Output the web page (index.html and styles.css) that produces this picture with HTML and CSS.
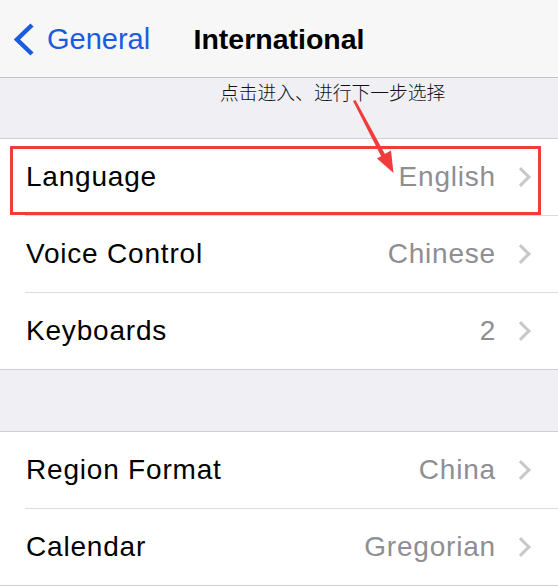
FILE: index.html
```html
<!DOCTYPE html>
<html>
<head>
<meta charset="utf-8">
<link rel="stylesheet" href="styles.css">
</head>
<body>
<div class="screen">
  <header class="nav">
    <div class="back">
      <svg class="back-icon" width="24" height="36" viewBox="0 0 24 36"><polyline points="18,3 3,17.5 18,32" fill="none" stroke="#1a5ce0" stroke-width="4.5" stroke-linecap="butt" stroke-linejoin="miter"/></svg>
      <span class="back-label">General</span>
    </div>
    <div class="title">International</div>
    <div></div>
  </header>
  <div class="spacer first"></div>
  <section class="group">
    <div class="row"><div class="cell"><span class="label">Language</span><span class="value">English</span><span class="chev"></span></div></div>
    <div class="row"><div class="cell"><span class="label">Voice Control</span><span class="value">Chinese</span><span class="chev"></span></div></div>
    <div class="row"><div class="cell last"><span class="label">Keyboards</span><span class="value">2</span><span class="chev"></span></div></div>
  </section>
  <div class="spacer"></div>
  <section class="group">
    <div class="row"><div class="cell"><span class="label">Region Format</span><span class="value">China</span><span class="chev"></span></div></div>
    <div class="row"><div class="cell last"><span class="label">Calendar</span><span class="value">Gregorian</span><span class="chev"></span></div></div>
  </section>

  <div class="note">点击进入、进行下一步选择</div>
  <div class="highlight"></div>
  <svg class="arrow" width="558" height="586" viewBox="0 0 558 586">
    <polygon points="353,101 355.5,100 386,156 382,158" fill="#f23b3b"/>
    <polygon points="377,158.5 391,150.5 393.5,173" fill="#f23b3b"/>
  </svg>
</div>
</body>
</html>
```
FILE: styles.css
```css
html, body {
  margin: 0;
  padding: 0;
  background: #efeff4;
}
.screen {
  position: relative;
  width: 558px;
  height: 586px;
  overflow: hidden;
  font-family: "Liberation Sans", Arial, sans-serif;
  background: #efeff4;
}
.nav {
  height: 76px;
  background: #f7f7f8;
  border-bottom: 1px solid #c4c4c8;
  display: grid;
  grid-template-columns: 1fr auto 1fr;
  align-items: center;
  padding-top: 1px;
  box-sizing: content-box;
}
.back {
  display: flex;
  align-items: center;
  padding-left: 14px;
  gap: 9px;
  color: #1a5ce0;
}
.back-icon {
  display: block;
  margin-top: 1px;
}
.back-label {
  font-size: 29px;
  line-height: 36px;
}
.title {
  font-size: 28.5px;
  font-weight: bold;
  color: #000;
  line-height: 36px;
}
.spacer {
  height: 61px;
  background: #efeff4;
}
.spacer.first {
  height: 60px;
}
.group {
  background: #fff;
  border-top: 1px solid #cfcfd3;
  border-bottom: 1px solid #cfcfd3;
}
.row {
  padding-left: 25px;
}
.cell {
  height: 76px;
  display: flex;
  align-items: center;
  border-bottom: 1px solid #dcdce0;
  padding-left: 1px;
  padding-right: 25px;
}
.cell.last {
  border-bottom: none;
}
.label {
  flex: 1;
  font-size: 28px;
  letter-spacing: 0.8px;
  color: #000;
}
.value {
  font-size: 28px;
  letter-spacing: 0.8px;
  color: #8e8e93;
  margin-right: 18px;
}
.chev {
  width: 11px;
  height: 11px;
  border-top: 3px solid #c7c7cc;
  border-right: 3px solid #c7c7cc;
  transform: rotate(45deg);
  margin-right: 5px;
}
.note {
  position: absolute;
  left: 220px;
  top: 80px;
  font-family: "Noto Sans CJK SC", sans-serif;
  font-size: 18.8px;
  line-height: 24px;
  color: #111;
  font-weight: 300;
}
.highlight {
  position: absolute;
  left: 10px;
  top: 146px;
  width: 525px;
  height: 63px;
  border: 3px solid #f23b3b;
}
.arrow {
  position: absolute;
  left: 0;
  top: 0;
  pointer-events: none;
}
```
